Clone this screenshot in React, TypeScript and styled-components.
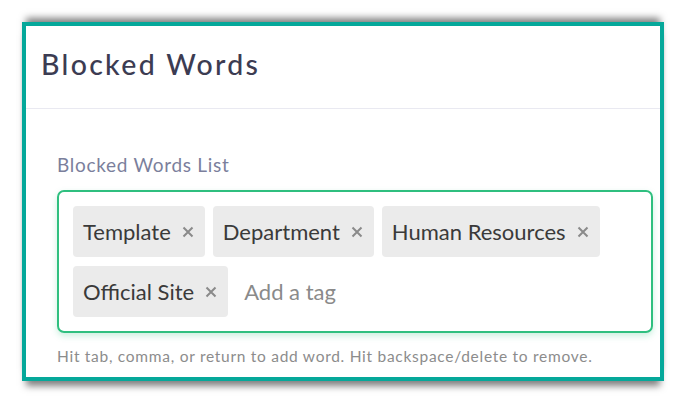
import React from "react";
import styled, { createGlobalStyle } from "styled-components";

const GlobalStyle = createGlobalStyle`
  html, body { margin: 0; padding: 0; background: #ffffff; }
  body { font-family: Lato, "Open Sans", Arial, sans-serif; }
  * { box-sizing: border-box; }
`;

const Page = styled.div`
  width: 688px;
  height: 405px;
  padding: 22px 0 0 22px;
  overflow: hidden;
`;

const Frame = styled.div`
  width: 642px;
  height: 359px;
  border: 4px solid #05a89a;
  background: #ffffff;
  box-shadow: 0 -8px 7px -4px rgba(0, 0, 0, 0.5), 0 9px 7px -4px rgba(0, 0, 0, 0.5);
  overflow: hidden;
  display: flex;
  flex-direction: column;
`;

const Header = styled.div`
  height: 83px;
  flex: none;
  display: flex;
  align-items: center;
  padding: 0 0 6px 15px;
  border-bottom: 1px solid #e9e9f1;
`;

const Title = styled.h1`
  margin: 0;
  font-family: Lato, sans-serif;
  font-weight: 500;
  font-size: 28.5px;
  letter-spacing: 2.3px;
  color: #3c3c52;
`;

const Body = styled.div`
  padding: 44px 7px 0 31px;
`;

const Label = styled.div`
  font-family: Lato, sans-serif;
  font-size: 19px;
  font-weight: 400;
  letter-spacing: 0.7px;
  color: #7b7f9c;
  margin-bottom: 14px;
`;

const TagBox = styled.div`
  border: 2px solid #2fbf7f;
  border-radius: 7px;
  padding: 14px;
  display: flex;
  flex-wrap: wrap;
  align-items: center;
  gap: 9px 8px;
  box-shadow: 0 3px 6px rgba(47, 191, 127, 0.25);
`;

const Tag = styled.div`
  height: 51px;
  display: flex;
  align-items: center;
  gap: 11px;
  padding: 0 11px 0 10px;
  background: #ebebeb;
  border-radius: 4px;
  font-size: 22px;
  color: #3a3a3a;
`;

const Remove = styled.span`
  display: inline-flex;
  width: 12px;
  height: 12px;
  color: #8a8a8a;
`;

const Placeholder = styled.span`
  padding-left: 8px;
  font-size: 22px;
  color: #8a8a8a;
`;

const Help = styled.div`
  margin-top: 14px;
  font-family: Lato, sans-serif;
  font-size: 15.5px;
  letter-spacing: 0.72px;
  color: #8c8c8c;
`;

const tags = ["Template", "Department", "Human Resources", "Official Site"];

const X = () => (
  <Remove>
    <svg width="12" height="12" viewBox="0 0 12 12">
      <path d="M1.5 1.5 L10.5 10.5 M10.5 1.5 L1.5 10.5" stroke="currentColor" strokeWidth="2" strokeLinecap="butt" />
    </svg>
  </Remove>
);

export default function App() {
  return (
    <>
      <GlobalStyle />
      <Page>
        <Frame>
          <Header>
            <Title>Blocked Words</Title>
          </Header>
          <Body>
            <Label>Blocked Words List</Label>
            <TagBox>
              {tags.map((t) => (
                <Tag key={t}>
                  {t}
                  <X />
                </Tag>
              ))}
              <Placeholder>Add a tag</Placeholder>
            </TagBox>
            <Help>Hit tab, comma, or return to add word. Hit backspace/delete to remove.</Help>
          </Body>
        </Frame>
      </Page>
    </>
  );
}
